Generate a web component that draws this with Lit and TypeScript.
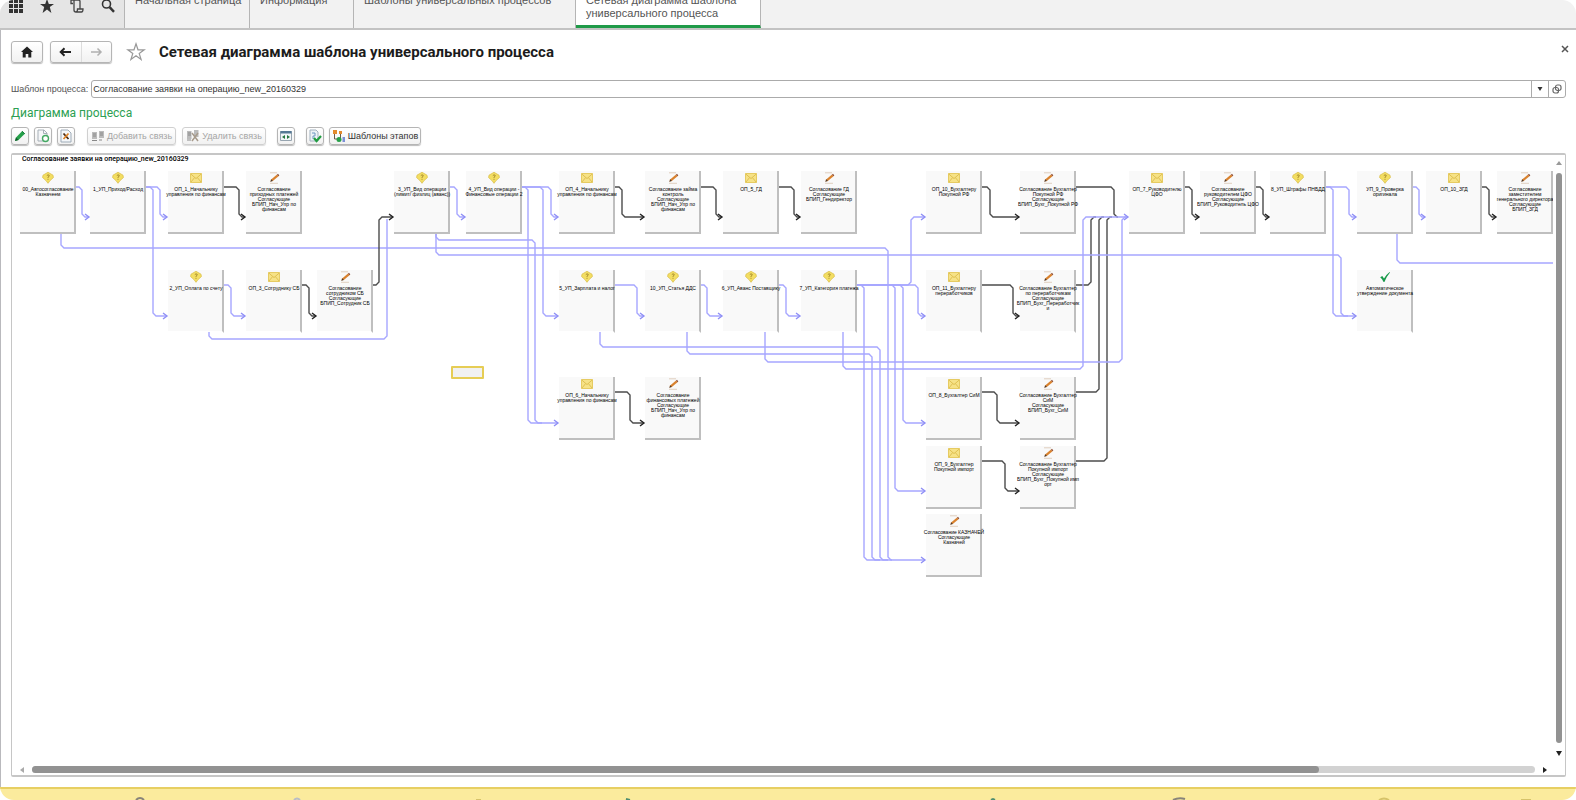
import { LitElement, html, css, svg, nothing } from "lit";
import { customElement, property } from "lit/decorators.js";
import { classMap } from "lit/directives/class-map.js";

type Kind = "question" | "mail" | "pencil" | "check";
type Point = [number, number];
interface Stage { x: number; y: number; kind: Kind; text: string; }
interface Link { points: Point[]; tone: "blue" | "black"; arrow: boolean; }

const ROW = [16, 115, 222, 291, 359];

const n = (x: number, row: number, kind: Kind, text: string): Stage => ({ x, y: ROW[row], kind, text });

const stages: Stage[] = [
  n(8, 0, "question", "00_Автосогласование\nКазначеем"),
  n(78, 0, "question", "1_УП_Приход/Расход"),
  n(156, 0, "mail", "ОП_1_Начальнику\nуправления по финансам"),
  n(234, 0, "pencil", "Согласование\nприходных платежей\nСогласующие\nБПИП_Нач_Упр по\nфинансам"),
  n(382, 0, "question", "3_УП_Вид операции\n(лимит/ физлиц (аванс))"),
  n(454, 0, "question", "4_УП_Вид операции -\nФинансовые операции 2"),
  n(547, 0, "mail", "ОП_4_Начальнику\nуправления по финансам"),
  n(633, 0, "pencil", "Согласование займа\nконтроль\nСогласующие\nБПИП_Нач_Упр по\nфинансам"),
  n(711, 0, "mail", "ОП_5_ГД"),
  n(789, 0, "pencil", "Согласование ГД\nСогласующие\nБПИП_Гендиректор"),
  n(914, 0, "mail", "ОП_10_Бухгалтеру\nПокупной РФ"),
  n(1008, 0, "pencil", "Согласование Бухгалтер\nПокупной РФ\nСогласующие\nБПИП_Бухг_Покупной РФ"),
  n(1117, 0, "mail", "ОП_7_Руководителю\nЦФО"),
  n(1188, 0, "pencil", "Согласование\nруководителем ЦФО\nСогласующие\nБПИП_Руководитель ЦФО"),
  n(1258, 0, "question", "8_УП_Штрафы ПНБДД"),
  n(1345, 0, "question", "УП_9_Проверка\nоригинала"),
  n(1414, 0, "mail", "ОП_10_ЗГД"),
  n(1485, 0, "pencil", "Согласование\nзаместителем\nгенерального директора\nСогласующие\nБПИП_ЗГД"),
  n(156, 1, "question", "2_УП_Оплата по счету"),
  n(234, 1, "mail", "ОП_3_Сотруднику СБ"),
  n(305, 1, "pencil", "Согласование\nсотрудником СБ\nСогласующие\nБПИП_Сотрудник СБ"),
  n(547, 1, "question", "5_УП_Зарплата и налог"),
  n(633, 1, "question", "10_УП_Статья ДДС"),
  n(711, 1, "question", "6_УП_Аванс Поставщику"),
  n(789, 1, "question", "7_УП_Категория платежа"),
  n(914, 1, "mail", "ОП_11_Бухгалтеру\nпереработчиков"),
  n(1008, 1, "pencil", "Согласование Бухгалтер\nпо переработчикам\nСогласующие\nБПИП_Бухг_Переработчик\nи"),
  n(1345, 1, "check", "Автоматическое\nутверждение документа"),
  n(547, 2, "mail", "ОП_6_Начальнику\nуправления по финансам"),
  n(633, 2, "pencil", "Согласование\nфинансовых платежей\nСогласующие\nБПИП_Нач_Упр по\nфинансам"),
  n(914, 2, "mail", "ОП_8_Бухгалтер СиМ"),
  n(1008, 2, "pencil", "Согласование Бухгалтер\nСиМ\nСогласующие\nБПИП_Бухг_СиМ"),
  n(914, 3, "mail", "ОП_9_Бухгалтер\nПокупной импорт"),
  n(1008, 3, "pencil", "Согласование Бухгалтер\nПокупной импорт\nСогласующие\nБПИП_Бухг_Покупной имп\nорт"),
  n(914, 4, "pencil", "Согласование КАЗНАЧЕЙ\nСогласующие\nКазначей"),
];

const blue = (arrow: boolean, ...points: Point[]): Link => ({ points, tone: "blue", arrow });
const black = (arrow: boolean, ...points: Point[]): Link => ({ points, tone: "black", arrow });

const links: Link[] = [
  black(false, [1064, 32], [1102, 32], [1102, 62], [1106, 62]),
  black(false, [1064, 130], [1079, 130], [1079, 62], [1084, 62]),
  black(false, [1064, 237], [1087, 237], [1087, 62], [1092, 62]),
  black(false, [1064, 306], [1095, 306], [1095, 62], [1100, 62]),
  blue(true, [64, 32], [70, 32], [70, 62], [77, 62]),
  blue(true, [134, 32], [148, 32], [148, 62], [155, 62]),
  blue(true, [134, 32], [141, 32], [141, 161], [155, 161]),
  blue(true, [49, 79], [49, 93], [876, 93], [876, 405], [913, 405]),
  blue(true, [212, 130], [219, 130], [219, 161], [233, 161]),
  blue(false, [197, 177], [197, 184], [375, 184], [375, 64]),
  blue(true, [438, 32], [445, 32], [445, 62], [453, 62]),
  blue(true, [510, 32], [539, 32], [539, 62], [546, 62]),
  blue(true, [510, 32], [531, 32], [531, 161], [546, 161]),
  blue(true, [510, 32], [516, 32], [516, 268], [546, 268]),
  blue(false, [424, 79], [424, 85], [523, 85], [523, 268], [530, 268]),
  blue(false, [424, 79], [424, 100], [1329, 100], [1329, 161], [1336, 161]),
  blue(true, [603, 130], [625, 130], [625, 161], [632, 161]),
  blue(true, [689, 130], [695, 130], [695, 161], [710, 161]),
  blue(true, [767, 130], [774, 130], [774, 161], [788, 161]),
  blue(false, [588, 177], [588, 192], [868, 192], [868, 405], [876, 405]),
  blue(false, [675, 177], [675, 199], [860, 199], [860, 405], [868, 405]),
  blue(false, [753, 177], [753, 207], [1110, 207], [1110, 62], [1114, 62]),
  blue(true, [831, 177], [831, 214], [1071, 214], [1071, 62], [1116, 62]),
  blue(false, [845, 130], [852, 130], [852, 405], [880, 405]),
  blue(true, [845, 130], [899, 130], [899, 62], [913, 62]),
  blue(true, [845, 130], [906, 130], [906, 161], [913, 161]),
  blue(true, [845, 130], [891, 130], [891, 268], [913, 268]),
  blue(true, [845, 130], [883, 130], [883, 336], [913, 336]),
  blue(true, [1314, 32], [1337, 32], [1337, 62], [1344, 62]),
  blue(true, [1314, 32], [1321, 32], [1321, 161], [1344, 161]),
  blue(true, [1401, 32], [1407, 32], [1407, 62], [1413, 62]),
  blue(false, [1385, 79], [1385, 108], [1541, 108]),
  black(true, [212, 32], [227, 32], [227, 62], [233, 62]),
  black(true, [290, 130], [297, 130], [297, 161], [304, 161]),
  black(true, [361, 130], [367, 130], [367, 62], [381, 62]),
  black(true, [603, 32], [610, 32], [610, 62], [632, 62]),
  black(true, [689, 32], [704, 32], [704, 62], [710, 62]),
  black(true, [767, 32], [782, 32], [782, 62], [788, 62]),
  black(true, [603, 237], [618, 237], [618, 268], [632, 268]),
  black(true, [970, 32], [978, 32], [978, 62], [1007, 62]),
  black(true, [970, 130], [1001, 130], [1001, 161], [1007, 161]),
  black(true, [970, 237], [985, 237], [985, 268], [1007, 268]),
  black(true, [970, 306], [993, 306], [993, 336], [1007, 336]),
  black(true, [1173, 32], [1180, 32], [1180, 62], [1187, 62]),
  black(true, [1244, 32], [1251, 32], [1251, 62], [1257, 62]),
  black(true, [1470, 32], [1477, 32], [1477, 62], [1484, 62]),
];

/* Orthogonal route with its corners cut off at 45 degrees. */
function route(points: Point[]): string {
  let d = `M${points[0][0]} ${points[0][1]}`;
  for (let i = 1; i < points.length; i++) {
    const [px, py] = points[i - 1];
    const [x, y] = points[i];
    const next = points[i + 1];
    if (!next) { d += `L${x} ${y}`; continue; }
    const cut = 3;
    d += `L${x - Math.sign(x - px) * cut} ${y - Math.sign(y - py) * cut}`;
    d += `L${x + Math.sign(next[0] - x) * cut} ${y + Math.sign(next[1] - y) * cut}`;
  }
  return d;
}

const stageIcon = {
  question: svg`<path d="M6 0.3 11 3.200 11.400 5.600 8 8.600 6 11.300 4 8.600.6 5.600 1 3.200z" fill="#f3de62" stroke="#dcc04e" stroke-width=".8"/><path d="M4.800 3.600Q6 2.200 7.200 3.300 7.600 4.400 6 5.200V6.200M6 7.200v.8" fill="none" stroke="#a08428" stroke-width=".9"/>`,
  mail: svg`<path d="M.5 1.500h11v9H.5z" fill="#f6e287" stroke="#e6cb62"/><path d="M.8 2 6 6.600 11.200 2M.8 10.200l3.800-4.600M11.200 10.200 7.400 5.600" fill="none" stroke="#dcbc4c" stroke-width=".9"/>`,
  pencil: svg`<path d="M2 .8h7M2 11.300h8" stroke="#dccbb8" stroke-width=".9"/><path d="M2.300 9.600 3.400 7.200 9 2.600 10.500 4.200 4.800 8.900z" fill="#d9822e"/><path d="M2.200 9.700 3.400 7.200 4.800 8.900z" fill="#4a3a30"/><path d="M9 2.600 10 1.800 11.300 3.500 10.500 4.200z" fill="#8b4a32"/>`,
  check: svg`<path d="M1.200 6.200 3.300 5 5 7.600Q7.200 3.600 10.600 1L11 1.600Q7.600 5.600 5.400 11H4.600Q3.200 7.800 1.200 6.200z" fill="#18994a"/>`,
};

@customElement("process-stage")
class ProcessStage extends LitElement {
  @property() kind: Kind = "mail";
  @property() text = "";
  @property({ type: Boolean }) open = false;

  static styles = css`
    :host { display: block; width: 56px; }
    .card {
      box-sizing: border-box; height: 63px; padding: 1px 0 0 2px;
      display: flex; flex-direction: column; align-items: center; gap: 3px;
      background: #f9f9f9; border-right: 2px solid #bfbfbf; border-bottom: 2px solid #bfbfbf;
    }
    .open { border-bottom-color: transparent; background-clip: padding-box; }
    svg { width: 12px; height: 12px; flex: none; }
    .text {
      margin: 0; white-space: pre; text-align: center; color: #000;
      font: 5px/5px "Liberation Sans", Arial, sans-serif;
    }
  `;

  render() {
    return html`<div class=${classMap({ card: true, open: this.open })}>
      <svg viewBox="0 0 12 12" aria-hidden="true">${stageIcon[this.kind]}</svg>
      <p class="text">${this.text}</p>
    </div>`;
  }
}

@customElement("process-diagram")
class ProcessDiagram extends LitElement {
  static styles = css`
    :host { display: block; position: relative; overflow: hidden; min-width: 0; }
    .title {
      margin: 0; padding: 0 10px;
      font: 500 7px/9px Roboto, "Liberation Sans", sans-serif; color: #000;
    }
    .links { position: absolute; inset: 0; width: 100%; height: 100%; }
    .link { fill: none; stroke-width: 1.4; }
    .blue { stroke: #a6a6ff; }
    .black { stroke: #4c4c4c; }
    .tip { fill: none; stroke-width: 1.4; }
    .tip.blue { stroke: #8f8ff5; }
    .tip.black { stroke: #222; }
    .stage { position: absolute; }
    .marker {
      position: absolute; left: 439px; top: 211px; box-sizing: border-box;
      width: 33px; height: 13px; border: 2px solid #e6cd55; border-radius: 1px; background: #f1f1f1;
    }
  `;

  render() {
    return html`
      <h3 class="title">Согласование заявки на операцию_new_20160329</h3>
      <svg class="links" aria-hidden="true">
        ${links.map((l) => {
          const [x, y] = l.points[l.points.length - 1];
          return svg`<path class="link ${l.tone}" d=${route(l.points)}/>
            ${l.arrow ? svg`<path class="tip ${l.tone}" d="M${x - 4} ${y - 3}L${x} ${y}L${x - 4} ${y + 3}"/>` : nothing}`;
        })}
      </svg>
      ${stages.map((s) => html`<process-stage class="stage" style="left:${s.x}px;top:${s.y}px"
        .kind=${s.kind} .text=${s.text} ?open=${s.y === ROW[1]}></process-stage>`)}
      <div class="marker"></div>
    `;
  }
}

@customElement("app-root")
class AppRoot extends LitElement {
  static styles = css`
    :host {
      display: flex; flex-direction: column; box-sizing: border-box; height: 100vh; overflow: hidden;
      border-radius: 14px; background: #fff; color: #333;
      font: 9px/14px "Liberation Sans", Arial, sans-serif;
    }
    button { font: inherit; color: inherit; padding: 0; margin: 0; }
    .top {
      display: flex; flex: none; height: 46px; margin-top: -18px;
      background: #f2f2f2; border-bottom: 2px solid #c3c3c3; color: #555;
      font-size: 11px; line-height: 13px;
    }
    .tools {
      display: flex; box-sizing: border-box; width: 125px; padding: 16px 8px 0; gap: 14px;
      background: #e5e5e5; border-right: 1px solid #b5b5b5; align-items: start;
    }
    .tool { border: 0; background: none; width: 17px; height: 16px; }
    .tool svg { display: block; width: 16px; height: 16px; }
    .tab {
      box-sizing: border-box; display: block; padding: 12px 10px 0; color: inherit; text-decoration: none;
      border-right: 1px solid #b5b5b5; white-space: nowrap;
    }
    .t1 { width: 125px; }
    .t2 { width: 104px; }
    .t3 { width: 222px; }
    .t4 { width: 185px; white-space: normal; background: #fff; border-bottom: 3px solid #1f9a48; }
    .body {
      flex: 1; min-height: 0; display: flex; flex-direction: column;
      padding: 10px; border-left: 1px solid #b9b9bd;
    }
    .head { display: flex; align-items: center; height: 23px; flex: none; }
    .btn {
      display: flex; align-items: center; justify-content: center; box-sizing: border-box;
      border: 1px solid #b5b5b5; border-radius: 3px; background: linear-gradient(#fff, #f1f1f1);
      box-shadow: 0 1px 1px #bbb;
    }
    .home { width: 32px; height: 22px; }
    .nav { display: flex; margin-left: 7px; width: 62px; height: 22px; }
    .nav button { flex: 1; border: 0; background: none; display: flex; align-items: center; justify-content: center; height: 20px; }
    .nav button + button { border-left: 1px solid #ddd; }
    .head svg, .btn svg { display: block; flex: none; }
    .star { border: 0; background: none; margin-left: 14px; width: 20px; height: 20px; }
    h1 {
      margin: 0 0 0 13px; flex: 1; color: #1c1c1c;
      font: bold 15px/22px Roboto, "Liberation Sans", sans-serif;
    }
    .close { border: 0; background: none; width: 12px; height: 12px; align-self: start; margin-top: 3px; margin-right: -5px; }
    .field { display: flex; align-items: center; flex: none; margin-top: 17px; gap: 3px; }
    .field label { white-space: nowrap; color: #555; }
    .combo { flex: 1; display: flex; box-sizing: border-box; height: 18px; border: 1px solid #ababab; border-radius: 3px; }
    .combo input { flex: 1; min-width: 0; border: 0; outline: 0; padding: 0 1px; font: inherit; color: #333; background: none; }
    .combo button { width: 17px; border: 0; border-left: 1px solid #ababab; background: none; display: flex; align-items: center; justify-content: center; }
    h2 {
      margin: 7px 0 0; flex: none; color: #2c9f52;
      font: 12px/16px Roboto, "Liberation Sans", sans-serif;
    }
    .bar { display: flex; flex: none; margin-top: 6px; height: 19px; }
    .bar .btn { height: 18px; gap: 2px; white-space: nowrap; }
    .sq { width: 18px; margin-right: 5px; }
    .add { width: 89px; margin-left: 7px; margin-right: 6px; }
    .del { width: 84px; margin-right: 11px; }
    .fit { margin-right: 11px; }
    .tpl { width: 92px; }
    .bar .btn:disabled { color: #a5a5a5; border-color: #d0d0d0; box-shadow: 0 1px 1px #ddd; }
    .panel {
      flex: 1; min-height: 0; margin-top: 7px; display: grid; box-sizing: border-box;
      grid-template-columns: minmax(0, 1fr) 12px; grid-template-rows: minmax(0, 1fr) 11px;
      border: 1px solid #c6c6c6; border-top-width: 2px; border-bottom-width: 2px; border-radius: 2px;
    }
    .vbar { display: flex; flex-direction: column; align-items: center; padding: 6px 0 8px; gap: 8px; grid-row: 1; grid-column: 2; }
    .vthumb { flex: 1; width: 6px; border-radius: 3px; background: #929292; }
    .hbar { grid-column: 1 / -1; display: flex; align-items: center; padding: 0 18px 0 8px; gap: 8px; }
    .htrack { flex: 1; height: 7px; border-radius: 4px; background: #d2d2d2; }
    .hthumb { width: 85.6%; height: 7px; border-radius: 4px; background: #929292; }
    .up, .down, .left, .right { width: 0; height: 0; border: 3px solid transparent; box-sizing: border-box; }
    .up { border-bottom: 4px solid #999; border-top: 0; }
    .down { border-top: 5px solid #222; border-bottom: 0; }
    .left { border-right: 4px solid #aaa; border-left: 0; }
    .right { border-left: 4px solid #222; border-right: 0; }
    footer { flex: none; height: 13px; box-sizing: border-box; border-top: 2px solid #e7cf62; background: #fbeb9d; display: flex; align-items: end; }
    footer svg { display: block; width: 100%; height: 4px; }
  `;

  render() {
    return html`
      <nav class="top">
        <div class="tools">
          <button class="tool" aria-label="Меню"><svg viewBox="0 0 16 16"><path fill="#333" d="M1 1h4v4H1zM6 1h4v4H6zM11 1h4v4h-4zM1 6h4v4H1zM6 6h4v4H6zM11 6h4v4h-4zM1 11h4v4H1zM6 11h4v4H6zM11 11h4v4h-4z"/></svg></button>
          <button class="tool" aria-label="Избранное"><svg viewBox="0 0 16 16"><path fill="#333" d="M8 1l1.800 5H15l-4.200 3.100L12.400 15 8 11.500 3.600 15l1.600-5.900L1 6h5.200z"/></svg></button>
          <button class="tool" aria-label="История"><svg viewBox="0 0 16 16" fill="none" stroke="#444" stroke-width="1.300"><path d="M4 5.500H2V2h7.500q1.500 0 1.500 1.500V11M5 2v10q0 2 2 2h5.500q1.500 0 1.500-3H8.500q0 3-1.500 3"/></svg></button>
          <button class="tool" aria-label="Поиск"><svg viewBox="0 0 16 16" fill="none" stroke="#333"><circle cx="6.500" cy="6" r="4" stroke-width="1.600"/><path d="M9.600 9.200 14 13.800" stroke-width="2.400"/></svg></button>
        </div>
        <a class="tab t1" href="#">Начальная страница</a>
        <a class="tab t2" href="#">Информация</a>
        <a class="tab t3" href="#">Шаблоны универсальных процессов</a>
        <a class="tab t4" href="#">Сетевая диаграмма шаблона универсального процесса</a>
      </nav>
      <main class="body">
        <header class="head">
          <button class="btn home" aria-label="Домой"><svg width="14" height="12" viewBox="0 0 14 12"><path fill="#222" d="M7 .5 13 6h-1.700v5.500H8.300V8H5.700v3.500H2.700V6H1z"/></svg></button>
          <div class="btn nav">
            <button aria-label="Назад"><svg width="13" height="10" viewBox="0 0 13 10"><path d="M12 5H2M5.500 1.200 1.700 5l3.800 3.800" fill="none" stroke="#222" stroke-width="2"/></svg></button>
            <button aria-label="Вперёд"><svg width="13" height="10" viewBox="0 0 13 10"><path d="M1 5h10M7.500 1.500 11 5 7.500 8.500" fill="none" stroke="#b0b0b0" stroke-width="1.500"/></svg></button>
          </div>
          <button class="star" aria-label="В избранное"><svg width="20" height="20" viewBox="0 0 20 20"><path d="M10 1.800l2 6h6.200l-5 3.700 1.900 6L10 13.800 4.900 17.500l1.900-6-5-3.700H8z" fill="#fff" stroke="#999" stroke-width="1.200"/></svg></button>
          <h1>Сетевая диаграмма шаблона универсального процесса</h1>
          <button class="close" aria-label="Закрыть"><svg width="12" height="12" viewBox="0 0 12 12"><path d="M3 3l6 6M9 3 3 9" stroke="#555" stroke-width="1.500"/></svg></button>
        </header>
        <div class="field">
          <label for="template">Шаблон процесса:</label>
          <div class="combo">
            <input id="template" type="text" value="Согласование заявки на операцию_new_20160329" />
            <button aria-label="Выбрать"><svg width="6" height="4" viewBox="0 0 6 4"><path d="M.5 0h5L3 4z" fill="#333"/></svg></button>
            <button aria-label="Открыть"><svg width="10" height="10" viewBox="0 0 10 10" fill="none" stroke="#666" stroke-width="1.200"><rect x="3.500" y="1" width="5.500" height="5.500" rx="2"/><rect x="1" y="3.500" width="5.500" height="5.500" rx="2"/></svg></button>
          </div>
        </div>
        <h2>Диаграмма процесса</h2>
        <div class="bar">
          <button class="btn sq" aria-label="Изменить"><svg width="12" height="12" viewBox="0 0 12 12"><path d="M1 11l1-3.500L8 1.200 10.800 3.800 4.500 10z" fill="#26a04a"/><path d="M1 11l1-3.500L4.500 10z" fill="#0e5a28"/><path d="M8 1.200 10.800 3.800" stroke="#0f7434"/></svg></button>
          <button class="btn sq" aria-label="Создать"><svg width="14" height="14" viewBox="0 0 14 14"><path d="M2 1h6l3 3v8H2z" fill="#f4f6f8" stroke="#a7b0b8"/><path d="M7.500 1v3.500H11" fill="none" stroke="#a7b0b8"/><circle cx="9.500" cy="9.500" r="3" fill="#fff" stroke="#43a862" stroke-width="1.400"/></svg></button>
          <button class="btn sq" aria-label="Удалить"><svg width="14" height="14" viewBox="0 0 14 14"><path d="M2 1h7l3 3v9H2z" fill="#f4f7fa" stroke="#9eabb8"/><path d="M4.500 4.500l5 5.500" stroke="#4b2a12" stroke-width="1.800"/><path d="M9.500 4.500l-5 5.500" stroke="#e08428" stroke-width="1.800"/></svg></button>
          <button class="btn add" disabled><svg width="14" height="12" viewBox="0 0 14 12"><path d="M1 2h5v7H1zM8 1h5v7H8z" fill="#bbb"/><path d="M2 4h3M2 6h3M9 3h3M9 5h3M1 10.500h5M8 10h3" stroke="#888"/></svg>Добавить связь</button>
          <button class="btn del" disabled><svg width="14" height="14" viewBox="0 0 14 14"><path d="M1 2h4.500v8H1zM8 1h4.500v7H8z" fill="#bbb"/><path d="M2 4h3M2 6h3M1 11h4" stroke="#888"/><path d="M6 4l6 8M12 4l-6 8" stroke="#a79b8c" stroke-width="1.500"/></svg>Удалить связь</button>
          <button class="btn sq fit" aria-label="Масштаб"><svg width="12" height="12" viewBox="0 0 12 12"><path d="M.5 1.500h11v9H.5z" fill="#f2f5f7" stroke="#97a5b0"/><path d="M.5 1h11v2.500H.5z" fill="#557894"/><path d="M5 5v4L2 7zM7 5v4l3-2z" fill="#23753e"/></svg></button>
          <button class="btn sq" aria-label="Проверить"><svg width="14" height="14" viewBox="0 0 14 14"><path d="M2 1h6l2 2v9H2z" fill="#edf2f7" stroke="#a3b2c1"/><path d="M4 4h3v3H5v3" fill="none" stroke="#6d98c2"/><path d="M6 9l2.500 3L13 7" fill="none" stroke="#1f9c40" stroke-width="2.200"/></svg></button>
          <button class="btn tpl"><svg width="14" height="14" viewBox="0 0 14 14"><path d="M1 1h4v4H1zM7 2h3v3H7z" fill="#e38a2b"/><path d="M2.500 5v5H5M8.500 5v4" fill="none" stroke="#6e5a44"/><circle cx="7" cy="10.500" r="2.500" fill="#26a048"/><path d="M10.500 8H13v5h-2.500z" fill="#7b8fd6"/></svg>Шаблоны этапов</button>
        </div>
        <section class="panel">
          <process-diagram></process-diagram>
          <div class="vbar"><i class="up"></i><div class="vthumb"></div><i class="down"></i></div>
          <div class="hbar"><i class="left"></i><div class="htrack"><div class="hthumb"></div></div><i class="right"></i></div>
        </section>
      </main>
      <footer>
        <svg viewBox="0 0 1576 4" preserveAspectRatio="none" aria-hidden="true">
          <g fill="none" stroke-width="2">
            <path d="M136 4Q140 0 144 4M1173 4Q1179 1 1185 3" stroke="#88847a"/>
            <path d="M294 4Q297 1 300 4" stroke="#b9bdc6"/>
            <path d="M626 3l4 1M991 4l2-1 2 1" stroke="#4f8d70"/>
            <path d="M476 4h5M1379 4Q1384 1 1389 4M1521 4h10" stroke="#d6c36a"/>
          </g>
        </svg>
      </footer>
    `;
  }
}
